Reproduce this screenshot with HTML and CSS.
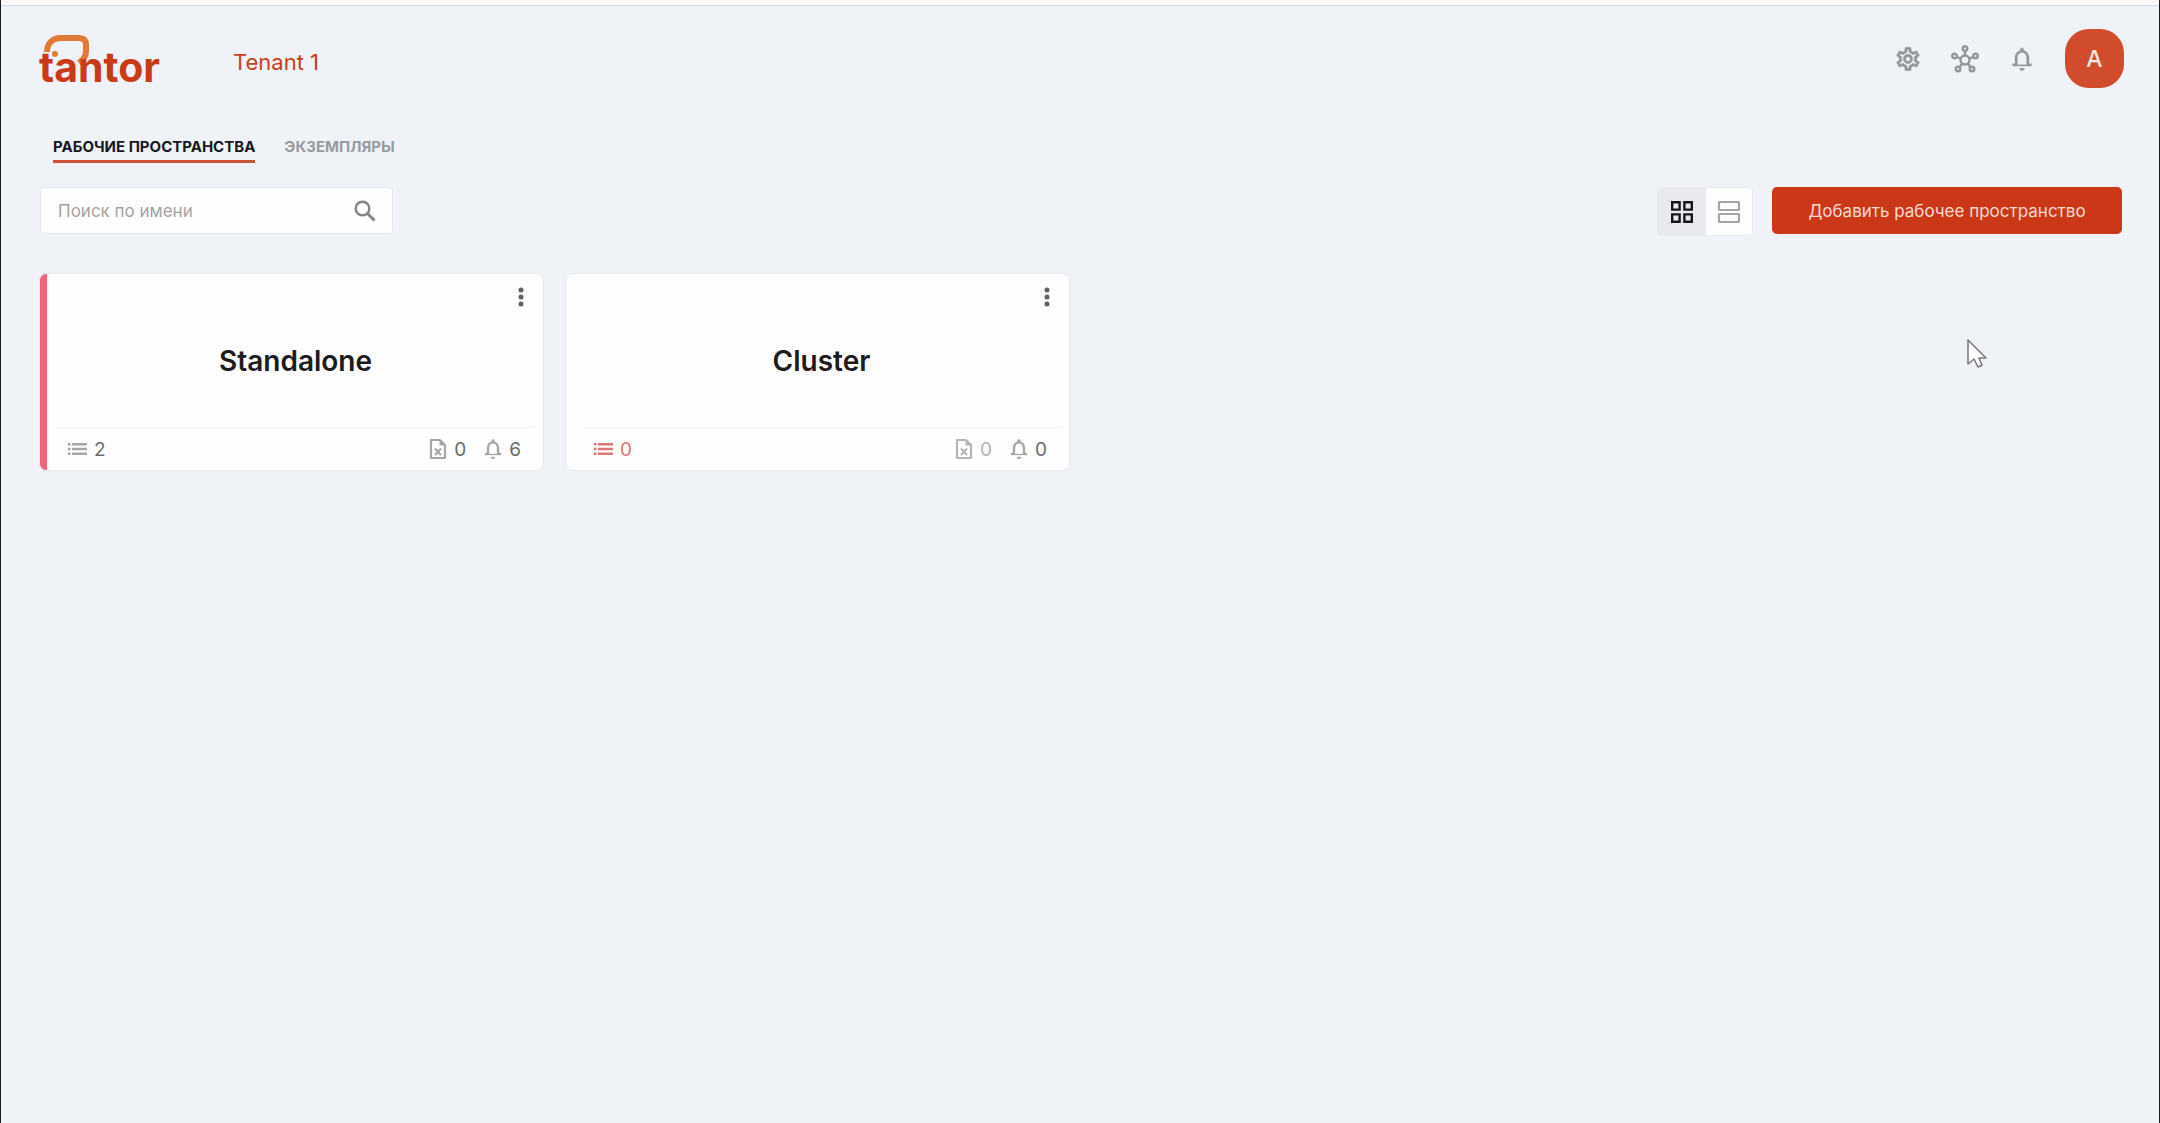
FILE: index.html
```html
<!DOCTYPE html>
<html lang="ru">
<head>
<meta charset="utf-8">
<meta name="viewport" content="width=device-width, initial-scale=1">
<title>Tantor</title>
<link rel="stylesheet" href="styles.css">
</head>
<body>
<svg class="sprite" aria-hidden="true">
  <symbol id="bell" viewBox="0 0 24 24"><path fill="currentColor" stroke="currentColor" stroke-width=".3" d="M12 22c1.100 0 2-.9 2-2h-4c0 1.100.9 2 2 2zm6-6v-5c0-3.070-1.640-5.640-4.500-6.320V4c0-.83-.67-1.500-1.500-1.500s-1.500.67-1.500 1.500v.68C7.630 5.360 6 7.920 6 11v5H4v2h16v-2h-2zm-2 1H8v-6c0-2.480 1.510-4.500 4-4.500s4 2.020 4 4.500v6z"/></symbol>
  <symbol id="list" viewBox="0 0 19 12"><path fill="currentColor" d="M0 0h2.500v2.500H0zM4 0h15v2.500H4zM0 4.750h2.500v2.500H0zM4 4.750h15v2.500H4zM0 9.500h2.500v2.500H0zM4 9.500h15v2.500H4z"/></symbol>
  <symbol id="file" viewBox="0 0 18 22"><path fill="none" stroke="currentColor" stroke-width="2.200" stroke-linejoin="round" d="M2 2h9l5 5v13H2z"/><path fill="currentColor" d="M10.500 1.500v6H16.500z"/><path fill="none" stroke="currentColor" stroke-width="2" d="M6 10.500l6 6.500M12 10.500l-6 6.500"/></symbol>
  <symbol id="dots" viewBox="0 0 6 20"><g fill="currentColor"><circle cx="3" cy="3" r="2.500"/><circle cx="3" cy="10" r="2.500"/><circle cx="3" cy="17" r="2.500"/></g></symbol>
</svg>

<div class="page">
  <header class="header">
    <a class="logo" href="#" aria-label="tantor">
      <svg width="128" height="64" viewBox="0 -4 128 64">
        <path d="M8 21C8 12 14 7 22 7H40Q47 7 47 14V20Q47 27 40 32" fill="none" stroke="#e07a35" stroke-width="6"/>
        <circle cx="16" cy="23" r="3" fill="#e07a35"/>
        <text class="logo-text" x="0" y="51">tantor</text>
      </svg>
    </a>
    <a class="tenant" href="#">Tenant 1</a>
    <div class="tools">
      <button class="tool" aria-label="Настройки">
        <svg width="28" height="28" viewBox="0 0 24 24"><path fill="currentColor" stroke="currentColor" stroke-width=".4" d="M19.430 12.980c.04-.32.07-.64.07-.98 0-.34-.03-.66-.07-.98l2.110-1.650c.19-.15.24-.42.12-.64l-2-3.460c-.09-.16-.26-.25-.44-.25-.06 0-.12.010-.17.030l-2.490 1c-.52-.4-1.080-.73-1.690-.98l-.38-2.650C14.460 2.180 14.250 2 14 2h-4c-.25 0-.46.18-.49.42l-.38 2.650c-.61.25-1.170.59-1.690.98l-2.490-1c-.06-.02-.12-.03-.18-.03-.17 0-.34.090-.43.250l-2 3.460c-.13.22-.07.49.12.640l2.110 1.650c-.04.32-.07.65-.07.980 0 .33.030.66.070.98l-2.110 1.650c-.19.15-.24.42-.12.640l2 3.460c.09.16.26.25.44.250.06 0 .12-.01.17-.03l2.490-1c.52.4 1.080.73 1.690.98l.38 2.650c.03.24.24.42.49.420h4c.25 0 .46-.18.49-.42l.38-2.650c.61-.25 1.170-.59 1.690-.98l2.490 1c.06.02.12.03.18.03.17 0 .34-.09.43-.25l2-3.460c.12-.22.07-.49-.12-.64l-2.110-1.650zm-1.980-1.710c.04.31.05.52.05.730 0 .21-.02.43-.05.73l-.14 1.130.89.7 1.080.84-.7 1.210-1.270-.51-1.040-.42-.9.680c-.43.32-.84.56-1.250.73l-1.060.43-.16 1.130-.2 1.350h-1.400l-.19-1.350-.16-1.130-1.060-.43c-.43-.18-.83-.41-1.230-.71l-.91-.7-1.060.43-1.270.51-.7-1.210 1.080-.84.89-.7-.14-1.130c-.03-.31-.05-.54-.05-.740s.02-.43.05-.73l.14-1.130-.89-.7-1.080-.84.7-1.210 1.270.51 1.040.42.9-.68c.43-.32.84-.56 1.250-.73l1.060-.43.16-1.130.2-1.350h1.390l.19 1.350.16 1.130 1.060.43c.43.18.83.41 1.230.71l.91.7 1.060-.43 1.270-.51.7 1.210-1.070.85-.89.7.14 1.130zM12 8c-2.210 0-4 1.790-4 4s1.790 4 4 4 4-1.790 4-4-1.790-4-4-4zm0 6c-1.100 0-2-.9-2-2s.9-2 2-2 2 .9 2 2-.9 2-2 2z"/></svg>
      </button>
      <button class="tool" aria-label="Сеть">
        <svg width="28" height="28" viewBox="0 0 28 28" fill="none" stroke="currentColor" stroke-width="2.400"><circle cx="14" cy="15" r="4.500"/><circle cx="14" cy="3.500" r="2.300"/><circle cx="3.500" cy="11" r="2.300"/><circle cx="24.500" cy="11" r="2.300"/><circle cx="7" cy="24" r="2.300"/><circle cx="21" cy="24" r="2.300"/><path d="M14 6v4.500M6 12l3.700 1.500M22 12l-3.700 1.500M8.700 22l2.600-3.500M19.300 22l-2.600-3.500"/></svg>
      </button>
      <button class="tool" aria-label="Уведомления"><svg width="28" height="28"><use href="#bell"/></svg></button>
      <button class="avatar">A</button>
    </div>
  </header>

  <nav class="tabs">
    <a class="tab active" href="#">РАБОЧИЕ ПРОСТРАНСТВА</a>
    <a class="tab" href="#">ЭКЗЕМПЛЯРЫ</a>
  </nav>

  <div class="toolbar">
    <label class="search">
      <input type="text" placeholder="Поиск по имени" aria-label="Поиск по имени">
      <svg width="22" height="22" viewBox="0 0 22 22" fill="none" stroke="#858585"><circle cx="8.500" cy="8.500" r="6.800" stroke-width="2.400"/><path d="M13.500 13.500l7 7" stroke-width="3"/></svg>
    </label>
    <div class="actions">
      <div class="views">
        <button class="view selected" aria-label="Плитка"><svg width="22" height="22" viewBox="0 0 22 22" fill="none" stroke="currentColor" stroke-width="2.400"><path d="M1.200 1.200h7.400v7.400H1.200zM13.400 1.200h7.400v7.400h-7.400zM1.200 13.400h7.400v7.400H1.200zM13.400 13.400h7.400v7.400h-7.400z"/></svg></button>
        <button class="view" aria-label="Список"><svg width="22" height="22" viewBox="0 0 22 22" fill="none" stroke="currentColor" stroke-width="2.200"><rect x="1" y="1" width="20" height="8" rx="1"/><rect x="1" y="13" width="20" height="8" rx="1"/></svg></button>
      </div>
      <button class="add">Добавить рабочее пространство</button>
    </div>
  </div>

  <main class="cards">
    <article class="card alert">
      <button class="menu" aria-label="Меню"><svg width="6" height="20"><use href="#dots"/></svg></button>
      <h2>Standalone</h2>
      <footer class="stats">
        <span class="stat first"><svg width="19" height="12"><use href="#list"/></svg>2</span>
        <span class="stat"><svg width="18" height="22"><use href="#file"/></svg>0</span>
        <span class="stat"><svg class="bell" width="24" height="24"><use href="#bell"/></svg>6</span>
      </footer>
    </article>
    <article class="card">
      <button class="menu" aria-label="Меню"><svg width="6" height="20"><use href="#dots"/></svg></button>
      <h2>Cluster</h2>
      <footer class="stats">
        <span class="stat first empty"><svg width="19" height="12"><use href="#list"/></svg>0</span>
        <span class="stat muted"><svg width="18" height="22"><use href="#file"/></svg>0</span>
        <span class="stat"><svg class="bell" width="24" height="24"><use href="#bell"/></svg>0</span>
      </footer>
    </article>
  </main>

  <svg class="cursor" width="22" height="30" viewBox="0 0 22 30" aria-hidden="true"><path d="M1 1v24l6-5 4 8 4-2-3-7h7z" fill="#fff" stroke="#77777c" stroke-width="1.500" stroke-linejoin="round"/></svg>
</div>
</body>
</html>
```

FILE: styles.css
```css
* { box-sizing: border-box; }

body {
  margin: 0;
  background: #eff2f7;
  font-family: Inter, sans-serif;
  color: #1c1c1e;
}

button {
  border: 0;
  padding: 0;
  background: none;
  font: inherit;
  color: inherit;
  display: flex;
  align-items: center;
  justify-content: center;
}

a { color: inherit; text-decoration: none; }
svg { display: block; flex: none; }
.sprite { position: absolute; width: 0; height: 0; }

.page {
  position: relative;
  min-height: 100vh;
  padding: 0 37px 40px 38px;
  border-left: 1px solid #1d1d25;
  border-right: 1px solid #1d1d25;
}

.page::before {
  content: "";
  display: block;
  height: 5px;
  margin: 0 -37px 0 -38px;
  background: #fafafa;
  border-bottom: 1px solid #d8d8e0;
}

.header {
  display: flex;
  align-items: center;
  height: 105px;
}

.logo svg { overflow: visible; }
.logo-text { font-size: 41px; font-weight: 700; fill: #ca3a17; }
.tenant { margin-left: 66px; padding-top: 6px; font-size: 22px; line-height: 28px; color: #c8401f; }

.tools {
  display: flex;
  align-items: center;
  gap: 29px;
  margin: 0 -2px 0 auto;
}
.tool { color: #93969b; }
.avatar {
  width: 59px;
  height: 59px;
  border-radius: 24px;
  background: #d04c2c;
  color: #fbe9e4;
  font-size: 23px;
  font-weight: 500;
}

.tabs {
  display: flex;
  gap: 29px;
  padding: 25px 0 0 14px;
  font-size: 15px;
  line-height: 22px;
  font-weight: 700;
  color: #989b9f;
}
.tab { padding-bottom: 2px; border-bottom: 3px solid transparent; }
.tab.active { color: #16181d; border-bottom-color: #cd5034; }

.toolbar {
  display: flex;
  align-items: flex-start;
  justify-content: space-between;
  margin-top: 24px;
}

.search {
  display: flex;
  align-items: center;
  width: 353px;
  height: 47px;
  margin-left: 1px;
  padding: 0 16px 0 17px;
  border: 1px solid #e6e7ec;
  border-radius: 4px;
  background: #fefefe;
}
.search input {
  flex: 1;
  min-width: 0;
  padding: 0;
  border: 0;
  outline: 0;
  background: none;
  font: 17px/24px Inter, sans-serif;
}
.search input::placeholder { color: #a3a3a3; opacity: 1; }

.actions { display: flex; align-items: flex-start; gap: 19px; }
.views {
  display: flex;
  width: 96px;
  height: 49px;
  border: 1px solid #e9eaee;
  border-radius: 5px;
  overflow: hidden;
}
.view { flex: 1; background: #fefefe; color: #a4a4a4; }
.view.selected { flex: 0 0 48px; background: #e9eaee; color: #16181d; }
.add {
  width: 350px;
  height: 47px;
  border-radius: 5px;
  background: #cb3817;
  color: #f9dcd4;
  font-size: 17px;
}

.cards {
  display: grid;
  grid-template-columns: repeat(4, 1fr);
  gap: 21px;
  margin-top: 37px;
}

.card {
  position: relative;
  display: flex;
  flex-direction: column;
  height: 198px;
  padding: 0 8px 0 16px;
  border: 1px solid #e6e8ed;
  border-radius: 7px;
  background: #fefefe;
  overflow: hidden;
}
.card.alert::before {
  content: "";
  position: absolute;
  inset: -1px auto -1px -1px;
  width: 8px;
  background: #f2637b;
}

.menu { position: absolute; top: 13px; right: 19px; color: #626262; }

h2 {
  flex: 1;
  display: flex;
  align-items: center;
  justify-content: center;
  margin: 0;
  padding-top: 21px;
  font-size: 28px;
  font-weight: 600;
}

.stats {
  display: flex;
  align-items: center;
  gap: 18px;
  height: 43px;
  padding: 0 14px 0 12px;
  border-top: 1px solid #f1f1ef;
  font-size: 19px;
  color: #6a6a6a;
}
.stat { display: flex; align-items: center; gap: 7px; }
.stat svg { color: #a5a5a5; }
.stat .bell { margin: 0 -3px; }
.stat.first { margin-right: auto; }
.stat.empty, .stat.empty svg { color: #dd7676; }
.stat.muted, .stat.muted svg { color: #b5b5b5; }

.cursor { position: absolute; left: 1966px; top: 339px; }
```
